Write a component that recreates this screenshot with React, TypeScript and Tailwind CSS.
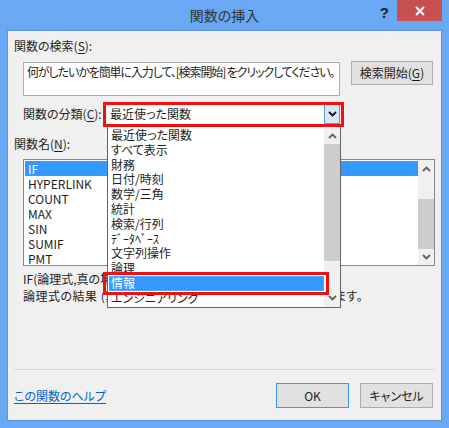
const font = "font-['Meiryo_UI','Noto_Sans_CJK_JP',sans-serif] [font-feature-settings:'palt']"

const categories = [
  '最近使った関数',
  'すべて表示',
  '財務',
  '日付/時刻',
  '数学/三角',
  '統計',
  '検索/行列',
  'ﾃﾞｰﾀﾍﾞｰｽ',
  '文字列操作',
  '論理',
  '情報',
  'エンジニアリング',
]

const functions = ['IF', 'HYPERLINK', 'COUNT', 'MAX', 'SIN', 'SUMIF', 'PMT']

function Chevron({ up = false, className = '' }: { up?: boolean; className?: string }) {
  return (
    <svg width="9" height="6" viewBox="0 0 9 6" className={className}>
      <polyline
        points={up ? '1,5 4.5,1.5 8,5' : '1,1 4.5,4.5 8,1'}
        fill="none"
        stroke="currentColor"
        strokeWidth="1.8"
      />
    </svg>
  )
}

function Underlined({ text, key1 }: { text: string; key1: string }) {
  return (
    <>
      {text}(<span className="underline underline-offset-2">{key1}</span>):
    </>
  )
}

export default function App() {
  return (
    <div className={`relative w-[449px] h-[428px] bg-[#69a8f3] text-[12px] text-[#1e1e1e] ${font}`}>
      {/* title bar */}
      <div className="relative h-[30px]">
        <div className="text-center text-[14px] leading-[30px] text-[#333]">関数の挿入</div>
        <div className="absolute top-0 right-[7px] flex items-start">
          <span className="mr-[8px] mt-[2px] text-[15px] font-bold text-[#222] font-['Liberation_Sans',sans-serif]">?</span>
          <button className="w-[45px] h-[21px] bg-[#c75050] flex items-center justify-center">
            <svg width="10" height="10" viewBox="0 0 10 10">
              <path d="M1 1L9 9M9 1L1 9" stroke="white" strokeWidth="2" />
            </svg>
          </button>
        </div>
      </div>

      {/* content */}
      <div className="mx-[7px] h-[391px] border border-[#5a93dc] bg-[#f0f0f0] flex flex-col">
        <div className="pl-[6px] pt-[7px] leading-[16px]">
          <Underlined text="関数の検索" key1="S" />
        </div>
        <div className="flex items-start mt-[8px]">
          <div className="ml-[15px] w-[317px] h-[34px] bg-white border border-[#abadb3] px-[3px] pt-[1px] leading-[16px] tracking-[-1.1px] whitespace-nowrap overflow-hidden">
            何がしたいかを簡単に入力して、[検索開始] をクリックしてください。
          </div>
          <button className="ml-[11px] -mt-[1px] w-[82px] h-[24px] bg-[#e1e1e1] border border-[#adadad] leading-[16px]">
            検索開始(<span className="underline underline-offset-2">G</span>)
          </button>
        </div>
        <div className="flex items-center mt-[8px] ml-[15px]">
          <div className="w-[84px] leading-[16px]">
            <Underlined text="関数の分類" key1="C" />
          </div>
          <div className="w-[233px] h-[20px] bg-white flex items-center">
            <span className="flex-1 pl-[3px] leading-[16px]">最近使った関数</span>
            <span className="w-[16px] h-[20px] bg-[#d7e9f9] border border-[#5d9be0] flex items-center justify-center text-[#111]">
              <Chevron />
            </span>
          </div>
        </div>
        <div className="pl-[6px] mt-[12px] leading-[16px]">
          <Underlined text="関数名" key1="N" />
        </div>
        <div className="ml-[15px] mt-[7px] w-[412px] h-[107px] bg-white border border-[#828790] flex">
          <div className="flex-1 pt-[1px] pl-[1px]">
            {functions.map((f, i) => (
              <div
                key={f}
                className={`h-[15px] leading-[15px] pl-[3px] ${i === 0 ? 'bg-[#3399ff] text-white' : ''}`}
              >
                {f}
              </div>
            ))}
          </div>
          <div className="w-[16px] bg-[#f0f0f0] flex flex-col text-[#606060]">
            <div className="h-[17px] flex items-center justify-center">
              <Chevron up />
            </div>
            <div className="h-[22px]" />
            <div className="h-[50px] bg-[#cdcdcd]" />
            <div className="flex-1 flex items-center justify-center">
              <Chevron />
            </div>
          </div>
        </div>
        <div className="ml-[15px] mt-[4px] leading-[17px] whitespace-nowrap">
          <div>IF(論理式,真の場合,偽の場合)</div>
          <div className="tracking-[0.5px]">論理式の結果 (真または偽) に応じて、指定された値を返します。</div>
        </div>
        <div className="mx-[6px] mt-[65px] h-px bg-[#d7d7d7]" />
        <div className="flex items-center mt-[13px] pl-[6px] pr-[8px]">
          <a className="flex-1 text-[#0066cc] underline underline-offset-2 leading-[16px]" href="#">
            この関数のヘルプ
          </a>
          <button className="w-[73px] h-[25px] bg-[#e1e1e1] border border-[#3399ff]">OK</button>
          <button className="ml-[11px] w-[73px] h-[25px] bg-[#e1e1e1] border border-[#adadad]">キャンセル</button>
        </div>
      </div>

      {/* open dropdown list */}
      <div className="absolute left-[107px] top-[126px] w-[234px] h-[182px] bg-white border border-[#646464] flex">
        <div className="flex-1 pt-[1px] pl-[1px]">
          {categories.map((c, i) => (
            <div
              key={c}
              className={`h-[14.8px] leading-[14.8px] pl-[2px] whitespace-nowrap ${
                i === 10 ? 'bg-[#3399ff] text-white outline outline-1 outline-dotted outline-[#f0a040] -outline-offset-1' : ''
              }`}
            >
              {c}
            </div>
          ))}
        </div>
        <div className="w-[16px] bg-[#f0f0f0] flex flex-col text-[#606060]">
          <div className="h-[17px] flex items-center justify-center">
            <Chevron up />
          </div>
          <div className="h-[117px] bg-[#cdcdcd]" />
          <div className="flex-1 flex items-end justify-center pb-[6px]">
            <Chevron />
          </div>
        </div>
      </div>

      {/* red highlight frames */}
      <div className="absolute left-[103px] top-[102px] w-[241px] h-[25px] border-[3px] border-[#f01010]" />
      <div className="absolute left-[103px] top-[272px] w-[226px] h-[23px] border-[3px] border-[#f01010]" />
    </div>
  )
}
